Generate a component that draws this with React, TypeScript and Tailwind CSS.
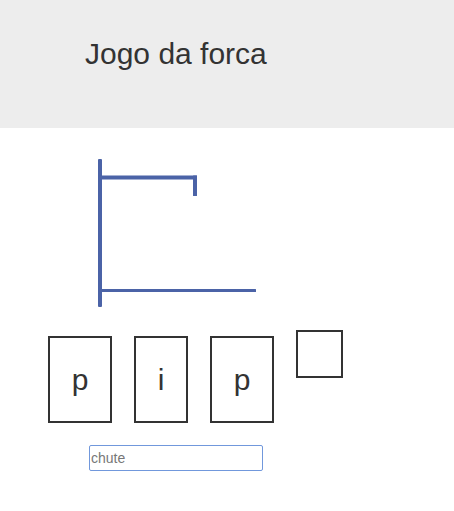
import React from 'react';

const letters = [
  { l: 'p', w: 'w-[64px]' },
  { l: 'i', w: 'w-[54px]' },
  { l: 'p', w: 'w-[64px]' },
];

function Gallows() {
  // desenho da forca (sem boneco ainda)
  return (
    <svg width="170" height="165" viewBox="0 0 170 165" className="block">
      <rect x="8" y="9" width="4" height="148" rx="1" fill="#4b63a7" />
      <rect x="10" y="25.5" width="97" height="4" fill="#4b63a7" />
      <rect x="103" y="25.5" width="4" height="20.5" rx="0.5" fill="#4b63a7" />
      <rect x="10" y="139" width="156" height="3" rx="0.5" fill="#4b63a7" />
    </svg>
  );
}

export default function App() {
  return (
    <div className="w-[454px] h-[511px] bg-white font-['Liberation_Sans',Arial,sans-serif] text-[#333]">
      {/* Header */}
      <header className="h-[128px] bg-[#ededed] pl-[85px] pt-[39px]">
        <h1 className="text-[30px] leading-[30px] font-normal">Jogo da forca</h1>
      </header>

      {/* Forca */}
      <div className="pl-[90px] pt-[22px]">
        <Gallows />
      </div>

      {/* Letras */}
      <div className="flex items-start gap-[22px] pl-[48px] mt-[15px]">
        {letters.map((item, i) => (
          <div
            key={i}
            className={`${item.w} mt-[6px] h-[87px] border-2 border-[#333] flex items-center justify-center text-[30px] leading-none`}
          >
            {item.l}
          </div>
        ))}
        <div className="w-[47px] h-[48px] border-2 border-[#333]" />
      </div>

      {/* Chute */}
      <div className="pl-[89px] mt-[22px]">
        <input
          autoFocus
          placeholder="chute"
          className="w-[174px] h-[26px] border border-[#7198dc] rounded-[2px] px-[1px] text-[14px] text-[#333] placeholder:text-[#777] outline-none font-['Liberation_Sans',Arial,sans-serif]"
        />
      </div>
    </div>
  );
}
